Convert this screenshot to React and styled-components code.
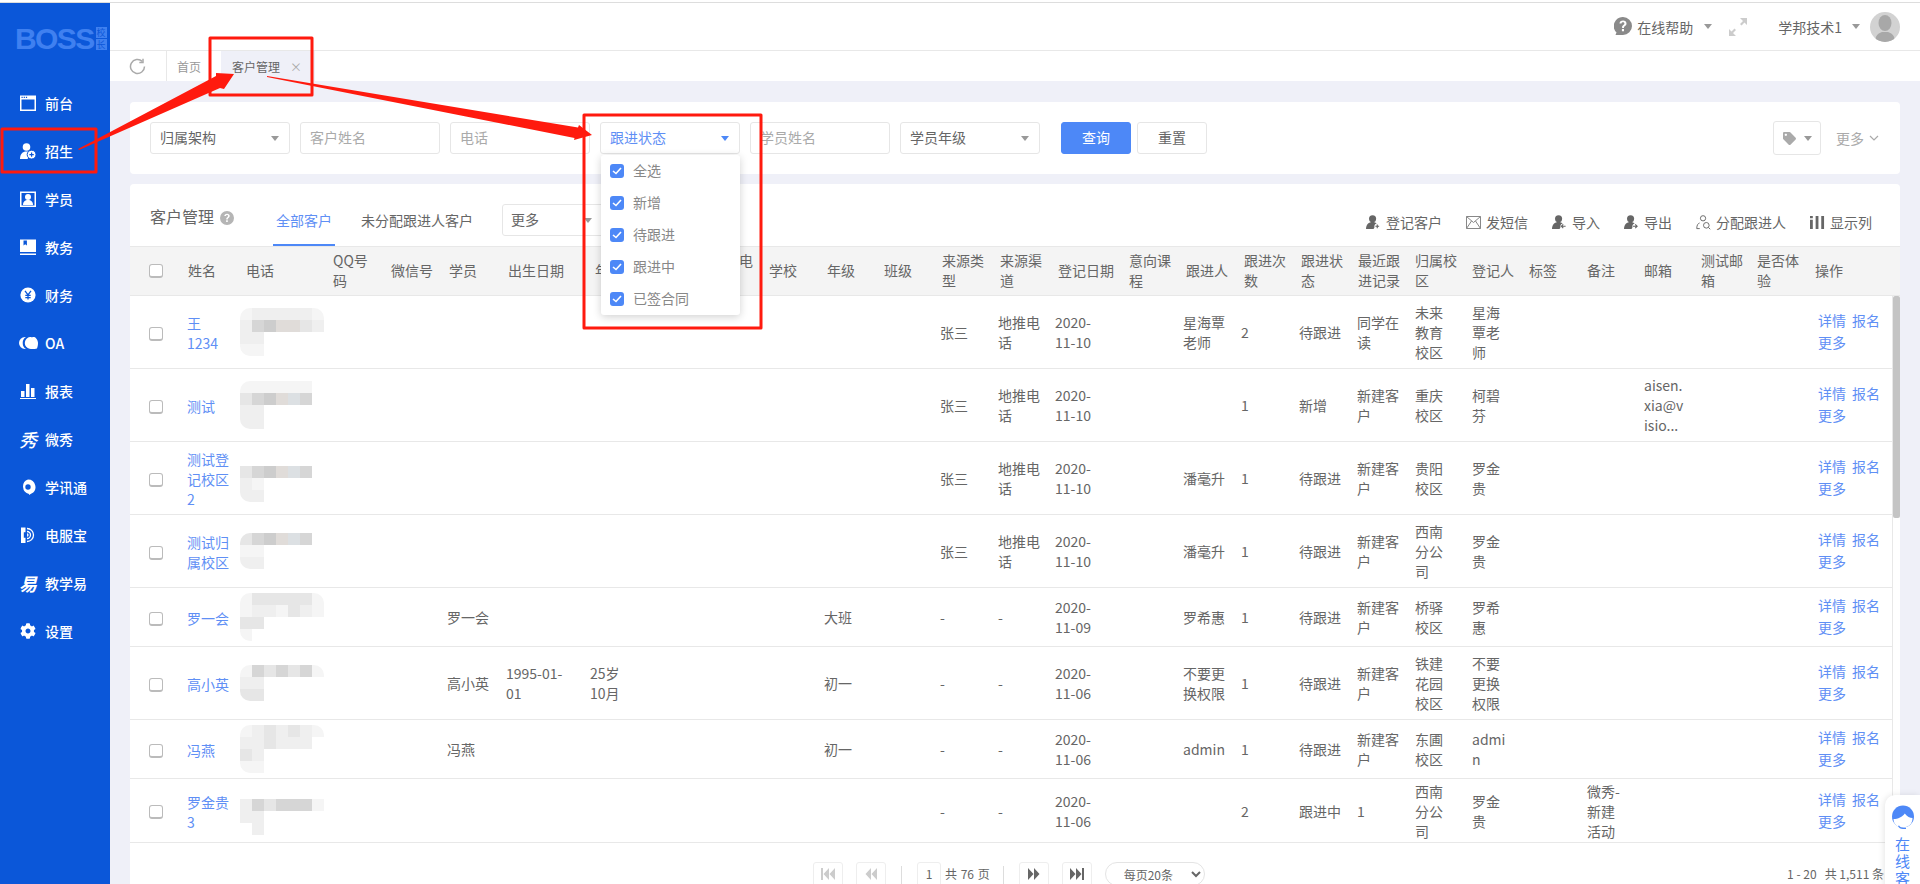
import React from "react";
import styled, { createGlobalStyle } from "styled-components";
import { FaCog, FaTag } from "react-icons/fa";

const BLUE = "#4d88f7";
const TEXT = "#666";
const HEAD_COLS = "39px 58px 87px 58px 58px 59px 87px 58px 58px 58px 58px 57px 58px 58px 58px 71px 57px 58px 57px 57px 57px 57px 57px 58px 57px 57px 56px 58px 1fr";
const BODY_COLS = "38px 53px 93px 56px 58px 59px 84px 61px 58px 58px 57px 58px 58px 58px 57px 72px 56px 58px 58px 58px 58px 57px 57px 58px 57px 57px 56px 61px 1fr";

const GlobalStyle = createGlobalStyle`
  html, body {
    margin: 0;
    height: 884px;
    overflow: hidden;
    background: #fff;
    font-family: "Noto Sans CJK SC", "Noto Sans", sans-serif;
    font-size: 14px;
    color: ${TEXT};
  }
  * { box-sizing: border-box; }
`;

const Page = styled.div`
  position: relative;
  width: 1920px;
  height: 884px;
  overflow: hidden;
`;

const TopLine = styled.div`
  height: 3px;
  border-bottom: 1px solid #ddd;
`;

const Shell = styled.div`
  display: flex;
  height: 881px;
`;

const Sidebar = styled.aside`
  width: 110px;
  flex: none;
  background: #0b57d9;
`;

const Logo = styled.div`
  height: 76px;
  padding: 23px 0 0 15px;
  display: flex;
  align-items: flex-start;
  gap: 2px;
  color: #3f80f0;
`;

const LogoWord = styled.span`
  font-family: "Liberation Sans", sans-serif;
  font-weight: 700;
  font-size: 30px;
  line-height: 26px;
  letter-spacing: -1.6px;
`;

const LogoBadges = styled.span`
  display: flex;
  flex-direction: column;
  gap: 1px;
  margin-top: 1px;
`;

const LogoBadge = styled.span`
  width: 11px;
  height: 11px;
  background: #3f80f0;
  color: #0b57d9;
  font-size: 9px;
  line-height: 11px;
  text-align: center;
`;

const NavItem = styled.div`
  height: 48px;
  padding-left: 20px;
  display: flex;
  align-items: center;
  gap: 9px;
  color: #fff;
  font-weight: 500;
  font-size: 14px;
`;

const NavIcon = styled.span`
  width: 16px;
  height: 16px;
  flex: none;
  display: flex;
  align-items: center;
  justify-content: center;
  font-size: 16px;

  svg { display: block; flex: none; }
`;

const GlyphIcon = styled.span`
  font-size: 18px;
  line-height: 16px;
  font-weight: ${(p) => p.$weight || 700};
  font-style: italic;
`;

const Main = styled.main`
  flex: 1;
  min-width: 0;
  display: flex;
  flex-direction: column;
`;

const Header = styled.header`
  height: 48px;
  flex: none;
  border-bottom: 1px solid #e8e8e8;
  padding-right: 20px;
  display: flex;
  justify-content: flex-end;
  align-items: center;
`;

const HeaderLabel = styled.span`
  margin-left: ${(p) => p.$left || 5}px;
  color: ${TEXT};
`;

const Caret = styled.i`
  display: inline-block;
  width: 0;
  height: 0;
  margin-left: ${(p) => p.$left || 0}px;
  border-left: 4.5px solid transparent;
  border-right: 4.5px solid transparent;
  border-top: 5px solid ${(p) => p.$color || "#999"};
`;

const Avatar = styled.span`
  width: 30px;
  height: 30px;
  margin-left: 10px;
  border-radius: 50%;
  overflow: hidden;
  background: #d2d2d2;
  display: block;
`;

const TabBar = styled.nav`
  height: 30px;
  flex: none;
  display: flex;
  align-items: stretch;
  font-size: 12px;
`;

const Refresh = styled.div`
  width: 57px;
  padding-left: 19px;
  border-right: 1px solid #e8e8e8;
  display: flex;
  align-items: center;
`;

const Tab = styled.div`
  display: flex;
  align-items: center;
  padding: 0 ${(p) => (p.$active ? 13 : 20)}px 0 ${(p) => (p.$active ? 11 : 10)}px;
  background: ${(p) => (p.$active ? "#eff0f8" : "#fff")};
  color: ${(p) => (p.$active ? TEXT : "#999")};
  gap: 10px;
`;

const TabClose = styled.span`
  color: #aaa;
  font-size: 12px;
`;

const Content = styled.div`
  flex: 1;
  min-height: 0;
  background: #eff0f8;
  padding: 21px 20px 0;
  display: flex;
  flex-direction: column;
  gap: 10px;
`;

const FilterCard = styled.section`
  height: 72px;
  flex: none;
  padding: 20px 21px 0 20px;
  background: #fff;
  border-radius: 4px;
  display: flex;
  align-items: flex-start;
  gap: 10px;
`;

const Field = styled.div`
  position: relative;
  width: 140px;
  height: 32px;
  padding: 0 10px 2px 9px;
  border: 1px solid #e6e6e6;
  border-radius: 3px;
  display: flex;
  align-items: center;
  justify-content: space-between;
  color: ${(p) => (p.$placeholder ? "#aaa" : p.$open ? "#5f8ff5" : TEXT)};
  white-space: nowrap;

  ${Caret} { margin-top: 2px; }
`;

const Dropdown = styled.div`
  position: absolute;
  z-index: 3;
  top: 32px;
  left: 0;
  width: 139px;
  height: 160px;
  padding: 0 9px;
  background: #fff;
  border-radius: 3px;
  box-shadow: 0 2px 8px rgba(0, 0, 0, 0.18);
`;

const Option = styled.div`
  height: 32px;
  padding-bottom: 2px;
  display: flex;
  align-items: center;
  gap: 9px;
  color: #888;
`;

const Tick = styled.span`
  width: 14px;
  height: 14px;
  margin-top: 2px;
  border-radius: 3px;
  background: ${BLUE};
  display: flex;
  align-items: center;
  justify-content: center;
`;

const Btn = styled.button`
  width: ${(p) => p.$width}px;
  height: 32px;
  margin-left: ${(p) => p.$left || 0}px;
  padding: 0 0 2px;
  border: 1px solid ${(p) => (p.$primary ? BLUE : "#e6e6e6")};
  border-radius: 3px;
  background: ${(p) => (p.$primary ? BLUE : "#fff")};
  color: ${(p) => (p.$primary ? "#fff" : TEXT)};
  font: inherit;
`;

const FilterRight = styled.div`
  margin-left: auto;
  display: flex;
  align-items: center;
  height: 32px;
  color: #aaa;
`;

const TagBtn = styled.div`
  width: 48px;
  height: 34px;
  margin-right: 15px;
  border: 1px solid #e6e6e6;
  border-radius: 3px;
  display: flex;
  align-items: center;
  justify-content: center;
  gap: 8px;
  color: #aaa;
`;

const TableCard = styled.section`
  flex: 1;
  min-height: 0;
  background: #fff;
  border-radius: 4px 4px 0 0;
  overflow: hidden;
`;

const CardBar = styled.div`
  position: relative;
  height: 62px;
  padding-left: 20px;
  display: flex;
  align-items: flex-start;
`;

const CardTitle = styled.h2`
  margin: 20px 0 0;
  font-size: 16px;
  font-weight: 400;
  line-height: 24px;
  color: ${TEXT};
`;

const ListTab = styled.div`
  height: 62px;
  padding: 25px 3px 0;
  margin-left: ${(p) => p.$left}px;
  line-height: 22px;
  color: ${(p) => (p.$active ? "#5f8ff5" : TEXT)};
  border-bottom: 2px solid ${(p) => (p.$active ? BLUE : "transparent")};
  white-space: nowrap;
`;

const MoreSelect = styled(Field)`
  width: 110px;
  margin: 20px 0 0 26px;
  padding: 0 19px 2px 8px;
`;

const Tools = styled.div`
  margin-left: auto;
  padding: 27px 28px 0 0;
  display: flex;
  gap: 24px;
`;

const Tool = styled.span`
  display: flex;
  align-items: center;
  gap: 5px;
  line-height: 22px;
  white-space: nowrap;
  color: ${TEXT};
`;

const HeadRow = styled.div`
  height: 50px;
  padding: 0 0 2px 19px;
  background: #f4f4f4;
  border-top: 1px solid #e8e8e8;
  border-bottom: 1px solid #e8e8e8;
  display: grid;
  grid-template-columns: ${HEAD_COLS};
  align-items: center;
  color: #777;
  line-height: 20px;
`;

const BodyWrap = styled.div`
  position: relative;
`;

const Row = styled.div`
  height: ${(p) => p.$height}px;
  width: 1762px;
  padding-left: 19px;
  border-bottom: 1px solid #e8e8e8;
  display: grid;
  grid-template-columns: ${BODY_COLS};
  align-items: center;
  line-height: 20px;
  overflow: hidden;
`;

const Cell = styled.div`
  white-space: pre;
  padding-top: ${(p) => (p.$link ? 2 : 0)}px;
  color: ${(p) => (p.$link ? "#5f8ff5" : TEXT)};
`;

const Box = styled.span`
  display: block;
  width: 14px;
  height: 14px;
  margin-top: ${(p) => p.$top || 0}px;
  background: #fff;
  border: 1.5px solid #bbb;
  border-bottom-width: 2px;
  border-radius: 3px;
`;

const Ops = styled.div`
  width: 70px;
  margin-top: -2px;
  display: flex;
  flex-wrap: wrap;
  gap: 2px 6px;
  color: #5f8ff5;
`;

const Blur = styled.div`
  display: grid;
  grid-template-columns: repeat(7, 12px);
  grid-auto-rows: 12px;
  width: 84px;
  border-radius: 10px;
  overflow: hidden;
`;

const Scrollbar = styled.div`
  position: absolute;
  top: 0;
  right: 0;
  width: 8px;
  height: 547px;
  border-left: 1px solid #e8e8e8;
`;

const Thumb = styled.div`
  height: 222px;
  background: #c4c4c4;
  border-radius: 2px;
`;

const Pager = styled.div`
  height: 41px;
  padding: 19px 0 0 683px;
  display: flex;
  align-items: flex-start;
  font-size: 12px;
  color: ${TEXT};
`;

const PageBtn = styled.span`
  width: 30px;
  height: 28px;
  margin-right: ${(p) => p.$right}px;
  border: 1px solid #eee;
  border-radius: 3px;
  display: flex;
  align-items: flex-start;
  justify-content: center;
  padding-top: 4px;
`;

const PageSep = styled.span`
  width: 1px;
  height: 18px;
  margin: 4px 15px 0 0;
  background: #ddd;
`;

const PageInput = styled.span`
  width: 24px;
  height: 26px;
  margin-right: 4px;
  border: 1px solid #eee;
  border-radius: 3px;
  text-align: center;
  line-height: 22px;
`;

const PageText = styled.span`
  margin-right: 13px;
  line-height: 24px;
  white-space: pre;
  word-spacing: 1px;
`;

const SizeSelect = styled.select`
  width: 100px;
  height: 24px;
  padding: 0 0 0 14px;
  border: 1px solid #e4e4e4;
  border-radius: 12px;
  background: #fff;
  font: inherit;
  color: ${TEXT};
`;

const PageTotal = styled.span`
  margin-left: auto;
  margin-right: 16px;
  line-height: 24px;
  white-space: pre;
`;

const ChatWidget = styled.div`
  position: absolute;
  z-index: 4;
  right: 0;
  top: 795px;
  width: 35px;
  height: 110px;
  padding-top: 10px;
  background: #fff;
  border-radius: 10px 0 0 0;
  box-shadow: -1px 0 6px rgba(0, 0, 0, 0.1);
  display: flex;
  flex-direction: column;
  align-items: center;
  color: ${BLUE};
  font-size: 15px;
  line-height: 17px;
  text-align: center;
`;

const ChatText = styled.span`
  width: 16px;
  margin-top: 3px;
`;

const Overlay = styled.svg`
  position: absolute;
  z-index: 5;
  left: 0;
  top: 0;
  pointer-events: none;
`;

const Svg = ({ children, size = 16, color = "#fff" }) => (
  <svg width={size} height={size} viewBox="0 0 16 16" fill={color}>
    {children}
  </svg>
);

const navItems = [
  {
    label: "前台",
    icon: (
      <Svg>
        <path fillRule="evenodd" d="M0 .5h16v15.500H0zM1.500 4.500v10h13v-10z" />
        <path d="M1.500 1.700h1.200v1.200H1.500zM3.700 1.700h1.200v1.200H3.700zM5.900 1.700h1.200v1.200H5.900z" fill="#0b57d9" />
      </Svg>
    ),
  },
  {
    label: "招生",
    icon: (
      <Svg>
        <circle cx="6.500" cy="4" r="3.800" />
        <path d="M0 16c0-5 2.500-7.500 6.500-7.500 2 0 3.500.6 4.500 1.700L7.500 16z" />
        <circle cx="11.600" cy="11.600" r="4.400" stroke="#0b57d9" strokeWidth="1" />
        <path d="M11.600 9.400v4.400M9.400 11.600h4.400" stroke="#0b57d9" strokeWidth="1.200" />
      </Svg>
    ),
  },
  {
    label: "学员",
    icon: (
      <Svg>
        <path fillRule="evenodd" d="M0 .5h16V16H0zM1.500 2v12.500h13V2z" />
        <circle cx="8" cy="6" r="3" />
        <path d="M3 14c0-3.500 2-5 5-5s5 1.500 5 5z" />
      </Svg>
    ),
  },
  {
    label: "教务",
    icon: (
      <Svg>
        <path fillRule="evenodd" d="M0 .5h16v12.500H0zM3.500 1.500v5l1.700-1.300 1.700 1.300v-5z" />
        <path d="M0 14.500h16V16H0z" />
      </Svg>
    ),
  },
  {
    label: "财务",
    icon: (
      <Svg>
        <circle cx="8" cy="8" r="7.600" />
        <path d="M5 3.800 8 8l3-4.200M8 8v4.600M5.300 8.400h5.400M5.300 10.600h5.400" stroke="#0b57d9" strokeWidth="1.300" fill="none" />
      </Svg>
    ),
  },
  {
    label: "OA",
    icon: (
      <svg width="19" height="12" viewBox="0 0 19 12" fill="#fff">
        <path fillRule="evenodd" d="M6 0a6 6 0 1 0 0 12h1C4.800 10.800 3.700 8.700 3.700 6S4.800 1.200 7 0z" />
        <path d="M8.500 1c1-1 3-1.300 4.500-.6 1.500-.6 3.200-.2 4.200 1 1.200 1.400 1.800 3 1.800 4.600 0 2-.4 4-1 5.500-2 .6-5.500.6-7.500.3C8 11 5.800 8.900 5.800 6.200 5.800 4 6.800 2.200 8.500 1z" />
      </svg>
    ),
  },
  {
    label: "报表",
    icon: (
      <Svg>
        <path d="M1 8h3.500v6H1zM6 1h3.500v13H6zM11 5h3.500v9H11zM0 15h16v1H0z" />
      </Svg>
    ),
  },
  { label: "微秀", icon: <GlyphIcon $weight={500}>秀</GlyphIcon> },
  {
    label: "学讯通",
    icon: (
      <Svg>
        <path fillRule="evenodd" d="M8 .5a7.500 7.500 0 0 1 3.500 14.100L9 16v-1.100A7.500 7.500 0 0 1 8 .5zM8 5.300a2.700 2.700 0 1 0 0 5.400 2.700 2.700 0 0 0 0-5.400z" />
      </Svg>
    ),
  },
  {
    label: "电服宝",
    icon: (
      <Svg>
        <path d="M1 .5h4.500v4.800H3.800v5.400h1.700V16H1z" />
        <path d="M7 1.500a6.500 6.500 0 0 1 0 13M7 4.500a3.500 3.500 0 0 1 0 7M7 7a1 1 0 0 1 0 2" stroke="#fff" strokeWidth="1.300" fill="none" />
      </Svg>
    ),
  },
  { label: "教学易", icon: <GlyphIcon>易</GlyphIcon> },
  { label: "设置", icon: <FaCog /> },
];

const tones = {
  a: "#f5f5f5", b: "#efefef", c: "#e6e6e6", d: "#d6d6d6", e: "#cdcdcd", f: "#e0dcd9", g: "#dce0e3", w: "#fff",
};

const rows = [
  { height: 73, name: "王\n1234", blur: "abbbbba bdeffcb bbwwwww aawwwww", source: "张三", channel: "地推电\n话", date: "2020-\n11-10", follower: "星海覃\n老师", count: "2", status: "待跟进", recent: "同学在\n读", campus: "未来\n教育\n校区", register: "星海\n覃老\n师" },
  { height: 73, name: "测试", blur: "aaaaaaw cdefgdw bbwwwww bbwwwww", source: "张三", channel: "地推电\n话", date: "2020-\n11-10", count: "1", status: "新增", recent: "新建客\n户", campus: "重庆\n校区", register: "柯碧\n芬", mail: "aisen.\nxia@v\nisio..." },
  { height: 73, name: "测试登\n记校区\n2", blur: "wwwwwww cdefgdw bawwwww bbwwwww", source: "张三", channel: "地推电\n话", date: "2020-\n11-10", follower: "潘毫升", count: "1", status: "待跟进", recent: "新建客\n户", campus: "贵阳\n校区", register: "罗金\n贵" },
  { height: 73, name: "测试归\n属校区", blur: "cdefgdw aawwwww bbwwwww", source: "张三", channel: "地推电\n话", date: "2020-\n11-10", follower: "潘毫升", count: "1", status: "待跟进", recent: "新建客\n户", campus: "西南\n分公\n司", register: "罗金\n贵" },
  { height: 59, name: "罗一会", blur: "accccca abbacba ccwwwww awwwwww", student: "罗一会", grade: "大班", source: "-", channel: "-", date: "2020-\n11-09", follower: "罗希惠", count: "1", status: "待跟进", recent: "新建客\n户", campus: "桥驿\n校区", register: "罗希\n惠" },
  { height: 73, name: "高小英", blur: "adcdcda bbwwwww ccwwwww", student: "高小英", birth: "1995-01-\n01", age: "25岁\n10月", grade: "初一", source: "-", channel: "-", date: "2020-\n11-06", follower: "不要更\n换权限", count: "1", status: "待跟进", recent: "新建客\n户", campus: "铁建\n花园\n校区", register: "不要\n更换\n权限" },
  { height: 59, name: "冯燕", blur: "abcbcba bbcbbbw cbwwwww aawwwww", student: "冯燕", grade: "初一", source: "-", channel: "-", date: "2020-\n11-06", follower: "admin", count: "1", status: "待跟进", recent: "新建客\n户", campus: "东圃\n校区", register: "admi\nn" },
  { height: 64, name: "罗金贵\n3", blur: "wwwwwww bdcddda bbwwwww wbwwwww", source: "-", channel: "-", date: "2020-\n11-06", count: "2", status: "跟进中", recent: "1", campus: "西南\n分公\n司", register: "罗金\n贵", remark: "微秀-\n新建\n活动" },
];

const headers = ["姓名", "电话", "QQ号\n码", "微信号", "学员", "出生日期", "年龄", "性别", "家庭电\n话", "学校", "年级", "班级", "来源类\n型", "来源渠\n道", "登记日期", "意向课\n程", "跟进人", "跟进次\n数", "跟进状\n态", "最近跟\n进记录", "归属校\n区", "登记人", "标签", "备注", "邮箱", "测试邮\n箱", "是否体\n验", "操作"];

const columns = ["name", "phone", "qq", "wechat", "student", "birth", "age", "gender", "tel", "school", "grade", "klass", "source", "channel", "date", "course", "follower", "count", "status", "recent", "campus", "register", "tag", "remark", "mail", "testMail", "trial"];

const UserTool = ({ mark }) => (
  <Svg size={15} color="#666">
    <circle cx="7" cy="4" r="3.800" />
    <path d="M0 15c0-5 3-7.500 7-7.500 2 0 3.500.6 4.500 2L8 15z" />
    <circle cx="12" cy="12" r="3" fill="#fff" />
    {mark === "plus" && <path d="M12 10v4M10 12h4" stroke="#666" strokeWidth="1.200" />}
    {mark === "in" && <path d="M14.500 12H10M12 10l-2 2 2 2" stroke="#666" strokeWidth="1.200" fill="none" />}
    {mark === "out" && <path d="M9.500 12H14M12 10l2 2-2 2" stroke="#666" strokeWidth="1.200" fill="none" />}
  </Svg>
);

const PageIcon = ({ d, color }) => (
  <svg width="16" height="14" viewBox="0 0 16 14" fill={color}>
    <path d={d} />
  </svg>
);

export default function App() {
  return (
    <Page>
      <GlobalStyle />
      <TopLine />
      <Shell>
        <Sidebar>
          <Logo>
            <LogoWord>BOSS</LogoWord>
            <LogoBadges>
              <LogoBadge>校</LogoBadge>
              <LogoBadge>长</LogoBadge>
            </LogoBadges>
          </Logo>
          {navItems.map((item) => (
            <NavItem key={item.label}>
              <NavIcon>{item.icon}</NavIcon>
              {item.label}
            </NavItem>
          ))}
        </Sidebar>
        <Main>
          <Header>
            <svg width="18" height="19" viewBox="0 0 18 19" fill="#8a8a8a">
              <path fillRule="evenodd" d="M9 0a9 9 0 0 1 0 18H1.500l1-2.600A9 9 0 0 1 9 0zm.1 3.500C6.900 3.500 5.600 4.700 5.500 6.500h2c.1-.8.600-1.300 1.500-1.300.8 0 1.400.5 1.400 1.200 0 .6-.3 1-1 1.500-1 .7-1.400 1.300-1.300 2.600V11h1.900v-.4c0-.8.200-1.100 1-1.700 1-.7 1.500-1.400 1.500-2.500 0-1.700-1.400-2.900-3.400-2.900zM7.900 12v2.200H10V12z" />
            </svg>
            <HeaderLabel>在线帮助</HeaderLabel>
            <Caret $left={11} />
            <svg width="18" height="18" viewBox="0 0 18 18" fill="#ccc" style={{ marginLeft: 17 }}>
              <path d="M11 0h7v7l-2.500-2.500-3 3-1.500-1.500 3-3zM7 18H0v-7l2.500 2.500 3-3L7 12l-3 3z" />
            </svg>
            <HeaderLabel $left={31}>学邦技术1</HeaderLabel>
            <Caret $left={10} />
            <Avatar>
              <svg width="30" height="30" viewBox="0 0 30 30" fill="#a8a8a8">
                <ellipse cx="15" cy="11" rx="6.500" ry="8" />
                <path d="M5 30c0-7 4-9 7-10h6c3 1 7 3 7 10z" />
              </svg>
            </Avatar>
          </Header>
          <TabBar>
            <Refresh>
              <svg width="17" height="17" viewBox="0 0 17 17" fill="none" stroke="#aaa" strokeWidth="1.500">
                <path d="M15.500 8.500A7 7 0 1 1 13.300 3.400" />
                <path d="M14 .8v3.700h-3.700" />
              </svg>
            </Refresh>
            <Tab>首页</Tab>
            <Tab $active>
              客户管理
              <TabClose>×</TabClose>
            </Tab>
          </TabBar>
          <Content>
            <FilterCard>
              <Field>
                归属架构
                <Caret />
              </Field>
              <Field $placeholder>客户姓名</Field>
              <Field $placeholder>电话</Field>
              <Field $open>
                跟进状态
                <Caret $color={BLUE} />
                <Dropdown>
                  {["全选", "新增", "待跟进", "跟进中", "已签合同"].map((label) => (
                    <Option key={label}>
                      <Tick>
                        <svg width="10" height="8" viewBox="0 0 10 8" fill="none" stroke="#fff" strokeWidth="1.600">
                          <path d="M1 4l3 2.500L9 1" />
                        </svg>
                      </Tick>
                      {label}
                    </Option>
                  ))}
                </Dropdown>
              </Field>
              <Field $placeholder>学员姓名</Field>
              <Field>
                学员年级
                <Caret />
              </Field>
              <Btn $primary $width={70} $left={11}>查询</Btn>
              <Btn $width={70} $left={-4}>重置</Btn>
              <FilterRight>
                <TagBtn>
                  <FaTag size={13} />
                  <Caret />
                </TagBtn>
                更多
                <svg width="10" height="6" viewBox="0 0 10 6" fill="none" stroke="#aaa" strokeWidth="1.200" style={{ marginLeft: 5 }}>
                  <path d="M1 1l4 4 4-4" />
                </svg>
              </FilterRight>
            </FilterCard>
            <TableCard>
              <CardBar>
                <CardTitle>客户管理</CardTitle>
                <svg width="14" height="14" viewBox="0 0 18 18" fill="#b5b5b5" style={{ margin: "27px 0 0 6px" }}>
                  <path fillRule="evenodd" d="M9 0a9 9 0 1 1 0 18A9 9 0 0 1 9 0zm.1 3.500C6.900 3.500 5.600 4.700 5.500 6.500h2c.1-.8.600-1.300 1.500-1.300.8 0 1.400.5 1.400 1.200 0 .6-.3 1-1 1.500-1 .7-1.400 1.300-1.300 2.600V11h1.900v-.4c0-.8.200-1.100 1-1.700 1-.7 1.500-1.400 1.500-2.500 0-1.700-1.400-2.900-3.400-2.900zM7.900 12v2.200H10V12z" />
                </svg>
                <ListTab $active $left={39}>全部客户</ListTab>
                <ListTab $left={23}>未分配跟进人客户</ListTab>
                <MoreSelect>
                  更多
                  <Caret $left={0} />
                </MoreSelect>
                <Tools>
                  <Tool><UserTool mark="plus" />登记客户</Tool>
                  <Tool>
                    <svg width="15" height="13" viewBox="0 0 15 13" fill="none" stroke="#888">
                      <path d="M.5.500h14v12H.500zM.5.500l7 6 7-6M.5 12.500l5-7.500M14.500 12.500l-5-7.500" />
                    </svg>
                    发短信
                  </Tool>
                  <Tool><UserTool mark="in" />导入</Tool>
                  <Tool><UserTool mark="out" />导出</Tool>
                  <Tool>
                    <Svg size={15} color="none">
                      <circle cx="7.500" cy="3.500" r="2.800" stroke="#666" />
                      <path d="M.8 14.500c0-4 1.500-5.500 3-6M4 14.500H.8" stroke="#666" />
                      <circle cx="11" cy="11" r="3" stroke="#666" />
                      <path d="M13.200 13.200l2 2" stroke="#666" />
                    </Svg>
                    分配跟进人
                  </Tool>
                  <Tool>
                    <Svg size={15} color="#666">
                      <path d="M0 5h3v10H0zM0 1h3v2.500H0zM6 1h3v14H6zM12 1h3v14h-3z" />
                    </Svg>
                    显示列
                  </Tool>
                </Tools>
              </CardBar>
              <HeadRow>
                <Box $top={2} />
                {headers.map((h) => (
                  <Cell as="span" key={h}>{h}</Cell>
                ))}
              </HeadRow>
              <BodyWrap>
                {rows.map((row, i) => (
                  <Row key={i} $height={row.height}>
                    <Box $top={3} />
                    {columns.map((key) =>
                      key === "phone" ? (
                        <Blur key={key}>
                          {row.blur.replace(/ /g, "").split("").map((t, n) => (
                            <span key={n} style={{ background: tones[t] || tones.w }} />
                          ))}
                        </Blur>
                      ) : (
                        <Cell key={key} $link={key === "name"}>{row[key]}</Cell>
                      )
                    )}
                    <Ops>
                      <span>详情</span>
                      <span>报名</span>
                      <span>更多</span>
                    </Ops>
                  </Row>
                ))}
                <Scrollbar>
                  <Thumb />
                </Scrollbar>
              </BodyWrap>
              <Pager>
                <PageBtn $right={13}><PageIcon color="#ccc" d="M1 1h2v12H1zM9 1v12L3.500 7zM15 1v12L9.500 7z" /></PageBtn>
                <PageBtn $right={15}><PageIcon color="#ccc" d="M8 1v12L2.500 7zM14 1v12L8.500 7z" /></PageBtn>
                <PageSep />
                <PageInput>1</PageInput>
                <PageText>共 76 页</PageText>
                <PageSep />
                <PageBtn $right={13}><PageIcon color="#666" d="M2 1v12l5.500-6zM8 1v12l5.500-6z" /></PageBtn>
                <PageBtn $right={13}><PageIcon color="#666" d="M1 1v12l5.500-6zM7 1v12l5.500-6zM13 1h2v12h-2z" /></PageBtn>
                <SizeSelect defaultValue="20">
                  <option value="20">每页20条</option>
                </SizeSelect>
                <PageTotal>1 - 20   共 1,511 条</PageTotal>
              </Pager>
            </TableCard>
          </Content>
        </Main>
      </Shell>
      <ChatWidget>
        <svg width="22" height="27" viewBox="0 0 22 27" fill="#4d88f7">
          <circle cx="11" cy="11.500" r="11" />
          <path fill="#fff" d="M1.500 14C6 14 10.500 12 12.800 8.500 15 11.500 18 13 20.500 13 20.500 19 16.500 22.500 11 22.500 5.500 22.500 1.500 19 1.500 14z" />
          <path d="M7 20.500c1 1.500 2.500 2.200 4.500 2.200h2.500v1.300h-3c-2.500 0-4.200-1-5-3z" />
        </svg>
        <ChatText>在线客服</ChatText>
      </ChatWidget>
      <Overlay width="1920" height="884" viewBox="0 0 1920 884">
        <g fill="none" stroke="#ff1a0e" strokeWidth="3" strokeLinejoin="round">
          <rect x="2" y="129" width="94" height="43" />
          <rect x="210" y="38" width="102" height="57" />
          <rect x="584" y="115" width="177" height="213" />
        </g>
        <g fill="#ff1a0e">
          <path d="M78 149 216 76 216 73 234 74 224 89 220 88 79 150z" />
          <path d="M267 76 578 127.500 579 125 592 135 574 140 574.500 138 267 77z" />
        </g>
      </Overlay>
    </Page>
  );
}
